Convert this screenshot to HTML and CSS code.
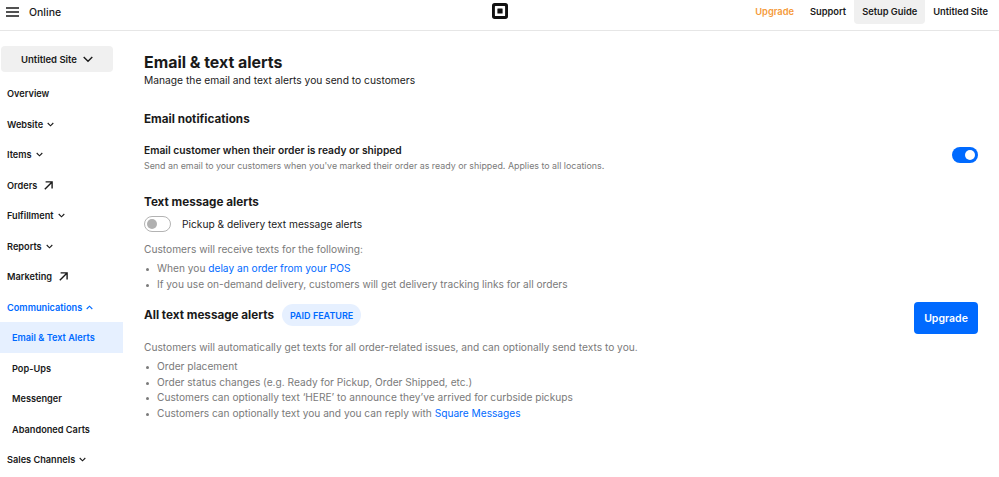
FILE: index.html
```html
<!DOCTYPE html>
<html lang="en">
<head>
<meta charset="utf-8">
<title>Email &amp; text alerts</title>
<link rel="stylesheet" href="styles.css">
</head>
<body>
<header class="topbar">
  <div class="top-left">
    <svg class="burger" width="13" height="10" viewBox="0 0 13 10"><path d="M0 1h13M0 5h13M0 9h13" stroke="#1a1a1a" stroke-width="1.4"/></svg>
    <span class="brand">Online</span>
  </div>
  <svg class="logo" width="16" height="16" viewBox="0 0 16 16"><path fill="#111" fill-rule="evenodd" d="M2.7 0h10.6A2.7 2.7 0 0 1 16 2.700v10.600a2.700 2.700 0 0 1-2.700 2.700H2.700A2.700 2.700 0 0 1 0 13.300V2.700A2.700 2.700 0 0 1 2.700 0zM3.400 2.900a.5.500 0 0 0-.5.500v9.200a.5.500 0 0 0 .5.500h9.200a.5.500 0 0 0 .5-.5V3.400a.5.500 0 0 0-.5-.5z"/><rect x="5.400" y="5.400" width="5.200" height="5.200" rx=".5" fill="#111"/></svg>
  <nav class="top-right">
    <a class="top-link upgrade">Upgrade</a>
    <a class="top-link">Support</a>
    <a class="top-link active">Setup Guide</a>
    <a class="top-link">Untitled Site</a>
  </nav>
</header>
<div class="layout">
  <aside class="sidebar">
    <button class="site-btn">Untitled Site
      <svg width="10" height="7" viewBox="0 0 10 7"><path d="M.7 1l4.300 4.300L9.300 1" fill="none" stroke="#1a1a1a" stroke-width="1.400"/></svg>
    </button>
    <ul class="nav">
      <li class="nav-item">Overview</li>
      <li class="nav-item">Website <svg class="chev" width="7" height="5" viewBox="0 0 7 5"><path d="M.7 1l2.800 2.800L6.300 1" fill="none" stroke="#1a1a1a" stroke-width="1.100"/></svg></li>
      <li class="nav-item">Items <svg class="chev" width="7" height="5" viewBox="0 0 7 5"><path d="M.7 1l2.800 2.800L6.300 1" fill="none" stroke="#1a1a1a" stroke-width="1.100"/></svg></li>
      <li class="nav-item">Orders <svg class="ext" width="9" height="9" viewBox="0 0 9 9"><path d="M.8 8.200l7-7M1.600 .9h6.500v6.500" fill="none" stroke="#1a1a1a" stroke-width="1.400"/></svg></li>
      <li class="nav-item">Fulfillment <svg class="chev" width="7" height="5" viewBox="0 0 7 5"><path d="M.7 1l2.800 2.800L6.300 1" fill="none" stroke="#1a1a1a" stroke-width="1.100"/></svg></li>
      <li class="nav-item">Reports <svg class="chev" width="7" height="5" viewBox="0 0 7 5"><path d="M.7 1l2.800 2.800L6.300 1" fill="none" stroke="#1a1a1a" stroke-width="1.100"/></svg></li>
      <li class="nav-item">Marketing <svg class="ext" width="9" height="9" viewBox="0 0 9 9"><path d="M.8 8.200l7-7M1.600 .9h6.500v6.500" fill="none" stroke="#1a1a1a" stroke-width="1.400"/></svg></li>
      <li class="nav-item open">Communications <svg class="chev" width="7" height="5" viewBox="0 0 7 5"><path d="M.7 4l2.800-2.800L6.300 4" fill="none" stroke="#006aff" stroke-width="1.100"/></svg></li>
      <li class="nav-item sub current">Email &amp; Text Alerts</li>
      <li class="nav-item sub">Pop-Ups</li>
      <li class="nav-item sub">Messenger</li>
      <li class="nav-item sub">Abandoned Carts</li>
      <li class="nav-item">Sales Channels <svg class="chev" width="7" height="5" viewBox="0 0 7 5"><path d="M.7 1l2.800 2.800L6.300 1" fill="none" stroke="#1a1a1a" stroke-width="1.100"/></svg></li>
    </ul>
  </aside>
  <main class="content">
    <h1 class="title">Email &amp; text alerts</h1>
    <p class="subtitle">Manage the email and text alerts you send to customers</p>

    <h2 class="section first">Email notifications</h2>
    <div class="row email-row">
      <div>
        <div class="row-title">Email customer when their order is ready or shipped</div>
        <div class="row-desc">Send an email to your customers when you've marked their order as ready or shipped. Applies to all locations.</div>
      </div>
      <span class="toggle on"><span class="knob"></span></span>
    </div>

    <h2 class="section texts">Text message alerts</h2>
    <div class="toggle-line">
      <span class="toggle off"><span class="knob"></span></span>
      <span class="toggle-label">Pickup &amp; delivery text message alerts</span>
    </div>
    <p class="muted lead">Customers will receive texts for the following:</p>
    <ul class="bullets">
      <li>When you <a class="link">delay an order from your POS</a></li>
      <li>If you use on-demand delivery, customers will get delivery tracking links for all orders</li>
    </ul>

    <div class="row paid-row">
      <div class="paid-head">
        <h2 class="section">All text message alerts</h2>
        <span class="badge">PAID FEATURE</span>
      </div>
      <button class="upgrade-btn">Upgrade</button>
    </div>
    <p class="muted lead2">Customers will automatically get texts for all order-related issues, and can optionally send texts to you.</p>
    <ul class="bullets">
      <li>Order placement</li>
      <li>Order status changes (e.g. Ready for Pickup, Order Shipped, etc.)</li>
      <li>Customers can optionally text ‘HERE’ to announce they’ve arrived for curbside pickups</li>
      <li>Customers can optionally text you and you can reply with <a class="link">Square Messages</a></li>
    </ul>
  </main>
</div>
</body>
</html>
```
FILE: styles.css
```css
* { box-sizing: border-box; }
html, body { margin: 0; padding: 0; }
body {
  width: 999px;
  height: 477px;
  overflow: hidden;
  background: #fff;
  color: #1a1a1a;
  font-family: Inter, "Liberation Sans", sans-serif;
  font-size: 10.2px;
}
.topbar {
  position: relative;
  display: flex;
  align-items: center;
  justify-content: space-between;
  height: 31px;
  border-bottom: 1px solid #e6e6e6;
  padding: 0 0 6px 6px;
}
.top-left { display: flex; align-items: center; gap: 10px; }
.burger { display: block; }
.brand { font-size: 10.5px; font-weight: 500; }
.logo { position: absolute; left: 492px; top: 3px; }
.top-right { display: flex; align-items: stretch; height: 24px; align-self: flex-start; padding-right: 3px; }
.top-link {
  display: flex;
  align-items: center;
  padding: 0 8px 2px;
  font-size: 9.300px;
  font-weight: 600;
  white-space: nowrap;
}
.upgrade { color: #f59a3a; }
.active { background: #f0f0f0; border-radius: 0 0 4px 4px; }
.layout { display: flex; }
.sidebar { width: 123px; flex: none; padding-top: 15px; }
.site-btn {
  display: flex;
  align-items: center;
  justify-content: center;
  gap: 6px;
  width: 112px;
  height: 26px;
  margin-left: 1px;
  border: 0;
  border-radius: 4px;
  background: #f0f0f0;
  color: #1a1a1a;
  font: 600 9.500px Inter, "Liberation Sans", sans-serif;
}
.nav { list-style: none; margin: 6.250px 0 0; padding: 0; }
.nav-item {
  display: flex;
  align-items: center;
  gap: 4px;
  height: 30.500px;
  padding-left: 7px;
  font-size: 9.200px;
  font-weight: 600;
  white-space: nowrap;
}
.ext { margin-left: 3px; }
.open { color: #006aff; }
.sub { padding-left: 12px; }
.current { background: #e6f0ff; color: #006aff; }
.content { flex: 1; padding: 22px 21px 0 21px; }
.title { margin: 0; font-size: 15.900px; line-height: 20px; font-weight: 700; }
.subtitle { margin: 0; font-size: 10.250px; line-height: 14px; }
.section { margin: 0; font-size: 11.700px; line-height: 16px; font-weight: 700; }
.first { margin-top: 24px; }
.row { display: flex; align-items: flex-start; justify-content: space-between; }
.email-row { margin-top: 16px; }
.row-title { font-size: 10.250px; line-height: 14px; font-weight: 600; }
.row-desc { margin-top: 3px; font-size: 8.870px; line-height: 12px; color: #7a7a7a; }
.toggle { display: block; position: relative; width: 27px; height: 16px; border-radius: 8px; flex: none; }
.toggle.on { width: 26px; background: #006aff; margin-top: 4px; }
.toggle.off { background: #fff; border: 1px solid #b3b3b3; }
.knob { position: absolute; width: 10px; height: 10px; border-radius: 50%; top: 3px; }
.on .knob { right: 3px; background: #fff; }
.off .knob { left: 2px; top: 2px; background: #b0b0b0; }
.texts { margin-top: 22px; }
.toggle-line { display: flex; align-items: center; gap: 11px; margin-top: 6px; }
.toggle-label { font-size: 10.200px; line-height: 14px; }
.muted { color: #7a7a7a; font-size: 10.200px; line-height: 14px; margin: 0; }
.lead { margin-top: 10px; }
.bullets { list-style: none; margin: 5px 0 0; padding: 0 0 0 13px; color: #7a7a7a; font-size: 10.170px; line-height: 15.600px; }
.bullets li { position: relative; }
.bullets li::before { content: ""; position: absolute; left: -11px; top: 7px; width: 3px; height: 3px; border-radius: 50%; background: #7a7a7a; }
.link { color: #006aff; }
.paid-row { margin-top: 10px; }
.paid-head { display: flex; align-items: center; gap: 8px; padding-top: 2px; }
.badge {
  display: flex;
  align-items: center;
  height: 22px;
  padding: 0 8px;
  border-radius: 11px;
  background: #e6f0ff;
  color: #006aff;
  font-size: 9px;
  font-weight: 600;
}
.upgrade-btn {
  width: 64px;
  height: 32px;
  border: 0;
  border-radius: 4px;
  background: #006aff;
  color: #fff;
  font: 600 10.500px Inter, "Liberation Sans", sans-serif;
}
.lead2 { margin-top: 6px; }
```
